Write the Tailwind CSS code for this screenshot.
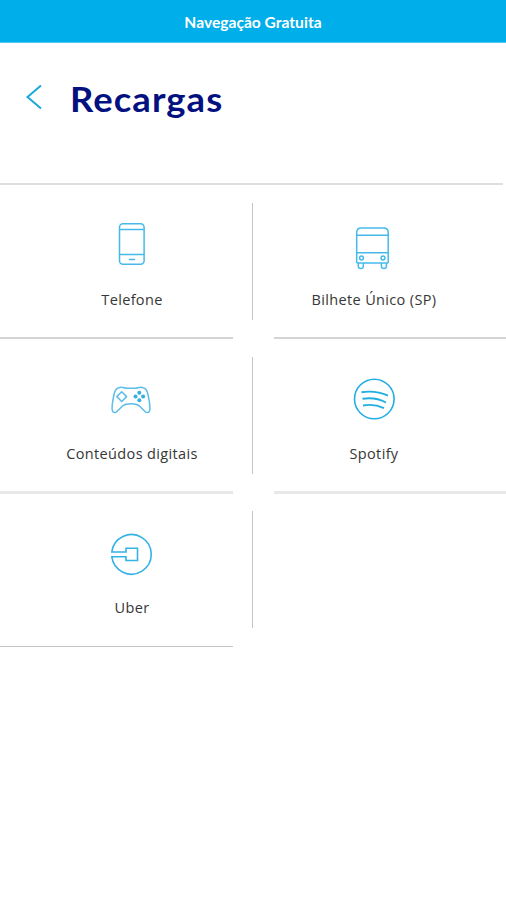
<!DOCTYPE html>
<html lang="pt-BR">
<head>
  <meta charset="UTF-8" />
  <meta name="viewport" content="width=device-width, initial-scale=1.0" />
  <title>Recargas</title>
  <script src="https://cdn.jsdelivr.net/npm/@tailwindcss/browser@4"></script>
</head>
<body class="bg-white min-h-screen overflow-x-hidden font-['Open_Sans',sans-serif] text-[#363636]">
  <div class="h-[43px] bg-[#00aee9] border-b border-[#55c9f1] flex items-center justify-center pt-[3px] font-['Lato',sans-serif] text-[15px] font-bold text-white">
    <span class="inline-block scale-x-[1.04]">Navegação Gratuita</span>
  </div>

  <header class="h-[140px] flex items-start pl-[25px] pt-[35px]">
    <button class="mt-[5px] w-[18px] h-[28px]" aria-label="Voltar">
      <svg width="18" height="28" viewBox="0 0 18 28" fill="none" stroke="#18a9dc" stroke-width="2"><path d="M16 2.5 2.5 14 16 25.5" /></svg>
    </button>
    <h1 class="ml-[27px] origin-left scale-x-[1.07] font-['Lato',sans-serif] text-[34px] leading-[42px] font-bold tracking-[1px] text-[#03107f]">Recargas</h1>
  </header>
  <div class="w-[503px] h-[2px] bg-[#dedede]"></div>

  <main class="grid grid-cols-[253px_253px] text-[14.5px] leading-[20px] tracking-[0.35px] whitespace-nowrap">
    <!-- Telefone -->
    <a class="h-[154px] flex flex-col">
      <div class="flex flex-1">
        <div class="flex-1 flex flex-col items-center pt-[37px] pl-[12px]">
          <svg class="shrink-0" width="44" height="48" viewBox="0 0 44 48" fill="none" stroke="#45baea" stroke-width="1.5">
            <rect x="9.5" y="1.7" width="24.6" height="40.6" rx="3.5" />
            <path d="M9.5 7.5h24.6M9.5 32.5h24.6" />
            <path d="M19.5 37.5h5" stroke-linecap="round" />
          </svg>
          <p class="mt-[20px]">Telefone</p>
        </div>
        <div class="mt-[18px] w-px h-[117px] bg-[#c4c4c4]"></div>
      </div>
      <div class="w-[233px] h-[2px] bg-[#d4d4d4]"></div>
    </a>

    <!-- Bilhete Único -->
    <a class="h-[154px] flex flex-col">
      <div class="flex-1 flex flex-col items-center pt-[37px] pr-[11px]">
        <svg class="shrink-0" width="44" height="48" viewBox="0 0 44 48" fill="none" stroke="#45baea" stroke-width="1.5">
          <path d="M4.7 41V10.5C4.700 7.500 6.200 6 9.200 6h22.500c3 0 4.500 1.500 4.500 4.500V41" />
          <path d="M4.700 13.300h31.500M4.700 30.700h31.500M4.700 41h31.500" />
          <circle cx="9.500" cy="36" r="1.900" />
          <circle cx="31" cy="36" r="1.900" />
          <path d="M6.300 41v3.200q0 2.300 2.500 2.300t2.500-2.300V41M29.400 41v3.200q0 2.300 2.500 2.300t2.500-2.300V41" />
        </svg>
        <p class="mt-[20px]">Bilhete Único (SP)</p>
      </div>
      <div class="self-end w-[232px] h-[2px] bg-[#d4d4d4]"></div>
    </a>

    <!-- Conteúdos digitais -->
    <a class="h-[154px] flex flex-col">
      <div class="flex flex-1">
        <div class="flex-1 flex flex-col items-center pt-[37px] pl-[12px]">
          <svg class="shrink-0" width="44" height="48" viewBox="0 0 44 48" fill="none" stroke="#5bbde8" stroke-width="1.5">
            <path d="M9.500 11.500c3-1 5 .800 7 .800h9c2 0 4-1.800 7-.800 3.500 1 4.500 2.500 5.500 7 1.500 7 2.500 14 1.500 16.500-.800 2-3 2-4.500.500L29.500 30c-4-3-13-3-17 0L7 35.500c-1.500 1.500-3.700 1.500-4.500-.500-1-2.500 0-9.500 1.500-16.500 1-4.500 2-6 5.500-7z" />
            <path d="m11.700 15.700 4.900 4.900-4.900 4.900-4.900-4.900z" stroke-linejoin="round" />
            <g fill="#35aee1" stroke="none">
              <circle cx="29.300" cy="16.700" r="2" />
              <circle cx="29.300" cy="24.300" r="2" />
              <circle cx="25.500" cy="20.500" r="2" />
              <circle cx="33.100" cy="20.500" r="2" />
            </g>
          </svg>
          <p class="mt-[20px]">Conteúdos digitais</p>
        </div>
        <div class="mt-[18px] w-px h-[117px] bg-[#c4c4c4]"></div>
      </div>
      <div class="w-[233px] h-[3px] -mb-px bg-[#e8e8e8]"></div>
    </a>

    <!-- Spotify -->
    <a class="h-[154px] flex flex-col">
      <div class="flex-1 flex flex-col items-center pt-[37px] pr-[11px]">
        <svg class="shrink-0" width="44" height="48" viewBox="0 0 44 48" fill="none" stroke="#22aee2" stroke-width="1.600">
          <circle cx="22.300" cy="23" r="19.800" />
          <path d="M9.500 16.200c9-1.400 18-.400 26.500 3.500M10.500 22.800c8-1.300 16-.300 23.500 3.700M11 29.500c7-1.300 14-.600 21 2.700" stroke-width="1.900" />
        </svg>
        <p class="mt-[20px]">Spotify</p>
      </div>
      <div class="self-end w-[232px] h-[3px] -mb-px bg-[#e8e8e8]"></div>
    </a>

    <!-- Uber -->
    <a class="h-[154px] flex flex-col">
      <div class="flex flex-1">
        <div class="flex-1 flex flex-col items-center pt-[37px] pl-[12px]">
          <svg class="shrink-0" width="44" height="48" viewBox="0 0 44 48" fill="none" stroke="#35b3e6" stroke-width="1.600">
            <path d="M1.800 22A19.800 19.800 0 1 1 1.800 26.700H16V30.500H27.500V18.200H16V22z" />
          </svg>
          <p class="mt-[20px]">Uber</p>
        </div>
        <div class="mt-[18px] w-px h-[117px] bg-[#c4c4c4]"></div>
      </div>
      <div class="w-[233px] h-px bg-[#c4c4c4]"></div>
    </a>
  </main>
</body>
</html>
